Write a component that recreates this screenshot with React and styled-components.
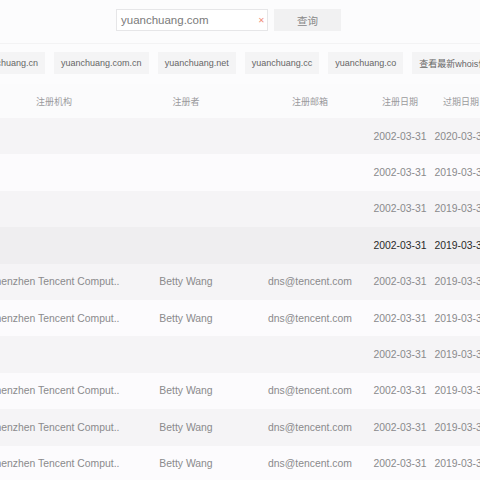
import React from "react";
import styled, { createGlobalStyle } from "styled-components";

const GlobalStyle = createGlobalStyle`
  html, body {
    margin: 0;
    padding: 0;
    background: #fcfcfd;
    overflow: hidden;
  }
  body {
    font-family: "Liberation Sans", "Noto Sans CJK SC", sans-serif;
  }
`;

const Page = styled.div`
  width: 480px;
  height: 480px;
  overflow: hidden;
  display: flex;
  flex-direction: column;
  > * {
    flex-shrink: 0;
  }
`;

const SearchBar = styled.div`
  display: flex;
  align-items: flex-start;
  gap: 6px;
  padding: 9px 0 0 116px;
  height: 44px;
  box-sizing: border-box;
  border-bottom: 1px solid #f3f3f4;
`;

const InputBox = styled.div`
  width: 152px;
  height: 22px;
  box-sizing: border-box;
  border: 1px solid #e6e6e8;
  background: #ffffff;
  display: flex;
  align-items: center;
  justify-content: space-between;
  padding: 0 2px 0 4px;
  font-size: 11.5px;
  color: #7a7a7a;
`;

const Clear = styled.span`
  color: #f0907a;
  font-size: 8px;
`;

const SearchButton = styled.button`
  width: 67px;
  height: 22px;
  border: none;
  background: #f1f1f2;
  color: #888;
  font-family: inherit;
  font-size: 10.5px;
  padding: 0;
`;

const Tabs = styled.div`
  display: flex;
  gap: 9px;
  margin: 8px 0 0 -30px;
  white-space: nowrap;
`;

const Chip = styled.div`
  height: 22px;
  padding: 0 7px;
  display: flex;
  align-items: center;
  background: #f4f4f5;
  color: #666;
  font-size: 9px;
  flex-shrink: 0;
`;

const Table = styled.div`
  margin: 10px 0 0 -16px;
  display: flex;
  flex-direction: column;
`;

const Row = styled.div`
  display: grid;
  grid-template-columns: 140px 124px 124px 56px 66px;
  height: ${(p) => (p.$head ? "34px" : "36.4px")};
  align-items: center;
  background: ${(p) =>
    p.$head ? "#fbfbfc" : p.$active ? "#efeef0" : p.$odd ? "#f5f4f6" : "#fcfbfd"};
  color: ${(p) => (p.$active ? "#2a2a2a" : "#8a8a8c")};
  font-size: ${(p) => (p.$head ? "9px" : "10.4px")};
`;

const Cell = styled.div`
  text-align: center;
  white-space: nowrap;
  color: ${(p) => (p.$head ? "#9a9a9c" : "inherit")};
`;

const tlds = [
  "yuanchuang.cn",
  "yuanchuang.com.cn",
  "yuanchuang.net",
  "yuanchuang.cc",
  "yuanchuang.co",
  "查看最新whois信息",
];

const full = ["Shenzhen Tencent Comput..", "Betty Wang", "dns@tencent.com"];
const rows = [
  { info: false, exp: "2020-03-31" },
  { info: false, exp: "2019-03-31" },
  { info: false, exp: "2019-03-31" },
  { info: false, exp: "2019-03-31", active: true },
  { info: true, exp: "2019-03-31" },
  { info: true, exp: "2019-03-31" },
  { info: false, exp: "2019-03-31" },
  { info: true, exp: "2019-03-31" },
  { info: true, exp: "2019-03-31" },
  { info: true, exp: "2019-03-31" },
];

export default function App() {
  return (
    <Page>
      <GlobalStyle />
      <SearchBar>
        <InputBox>
          yuanchuang.com
          <Clear>✕</Clear>
        </InputBox>
        <SearchButton>查询</SearchButton>
      </SearchBar>
      <Tabs>
        {tlds.map((t) => (
          <Chip key={t}>{t}</Chip>
        ))}
      </Tabs>
      <Table>
        <Row $head>
          <Cell $head>注册机构</Cell>
          <Cell $head>注册者</Cell>
          <Cell $head>注册邮箱</Cell>
          <Cell $head>注册日期</Cell>
          <Cell $head>过期日期</Cell>
        </Row>
        {rows.map((r, i) => (
          <Row key={i} $odd={i % 2 === 0} $active={r.active}>
            <Cell>{r.info ? full[0] : ""}</Cell>
            <Cell>{r.info ? full[1] : ""}</Cell>
            <Cell>{r.info ? full[2] : ""}</Cell>
            <Cell>2002-03-31</Cell>
            <Cell>{r.exp}</Cell>
          </Row>
        ))}
      </Table>
    </Page>
  );
}
